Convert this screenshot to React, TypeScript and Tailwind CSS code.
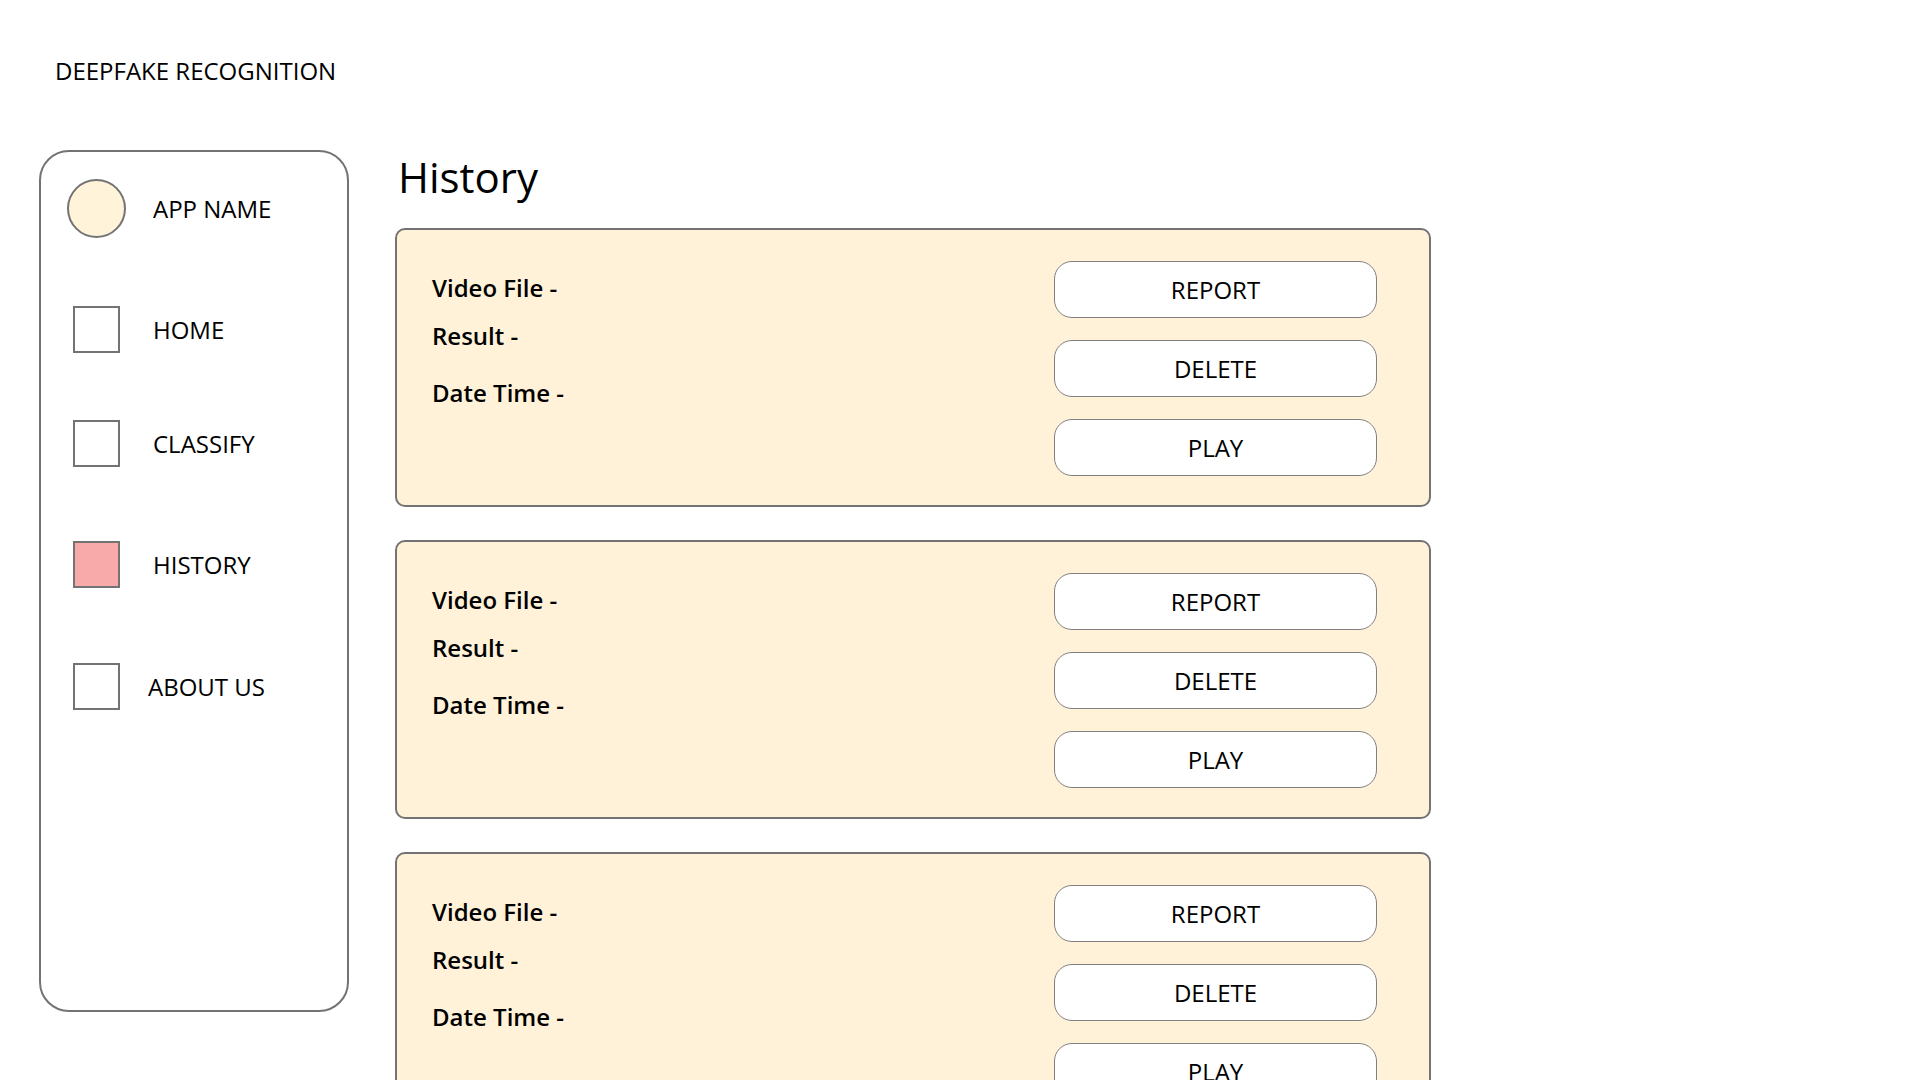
const navItems = [
  { label: "HOME", mt: "mt-[68px]", active: false, textPl: "pl-[33px]" },
  { label: "CLASSIFY", mt: "mt-[67px]", active: false, textPl: "pl-[33px]" },
  { label: "HISTORY", mt: "mt-[74px]", active: true, textPl: "pl-[33px]" },
  { label: "ABOUT US", mt: "mt-[75px]", active: false, textPl: "pl-[28px]" },
];

const records = [1, 2, 3];

function Sidebar() {
  return (
    <aside className="w-[310px] h-[862px] shrink-0 rounded-[30px] border-2 border-[#737373] pt-[27px]">
      <div className="flex items-center h-[59px] pl-[26px]">
        <div className="w-[59px] h-[59px] rounded-full border-2 border-[#737373] bg-[#fff3d9]" />
        <span className="pl-[27px] text-[24px] leading-[32px] font-medium text-black">APP NAME</span>
      </div>
      {navItems.map((item) => (
        <div key={item.label} className={`flex items-center h-[47px] pl-[32px] ${item.mt}`}>
          <div
            className={`w-[47px] h-[47px] border-2 border-[#737373] ${item.active ? "bg-[#f8a9a9]" : "bg-white"}`}
          />
          <span className={`${item.textPl} text-[24px] leading-[32px] font-normal text-black`}>{item.label}</span>
        </div>
      ))}
    </aside>
  );
}

function RecordCard() {
  return (
    <div className="w-[1036px] h-[279px] shrink-0 rounded-[10px] border-2 border-[#737373] bg-[#fff2d8] flex justify-between pl-[35px] pr-[52px]">
      <div className="pt-[42px] flex flex-col text-[24px] leading-[32px] font-semibold text-black">
        <span>Video File -</span>
        <span className="mt-[16px]">Result -</span>
        <span className="mt-[25px]">Date Time -</span>
      </div>
      <div className="pt-[31px] flex flex-col gap-[22px]">
        {["REPORT", "DELETE", "PLAY"].map((b) => (
          <button
            key={b}
            type="button"
            className="w-[323px] h-[57px] rounded-[18px] border border-[#808080] bg-white text-[24px] leading-[32px] font-medium text-black"
          >
            {b}
          </button>
        ))}
      </div>
    </div>
  );
}

export default function App() {
  return (
    <div
      className="w-[1920px] h-[1080px] overflow-hidden bg-white text-black"
      style={{ fontFamily: '"Open Sans", "Noto Sans", sans-serif' }}
    >
      <header className="pl-[55px] pt-[55px] h-[150px]">
        <h1 className="text-[24px] leading-[32px] font-medium">DEEPFAKE RECOGNITION</h1>
      </header>
      <div className="flex pl-[39px]">
        <Sidebar />
        <main className="ml-[46px] flex flex-col">
          <h2 className="pl-[3px] mt-[6px] text-[42px] leading-[42px] font-normal">History</h2>
          <div className="mt-[30px] flex flex-col gap-[33px]">
            {records.map((r) => (
              <RecordCard key={r} />
            ))}
          </div>
        </main>
      </div>
    </div>
  );
}
